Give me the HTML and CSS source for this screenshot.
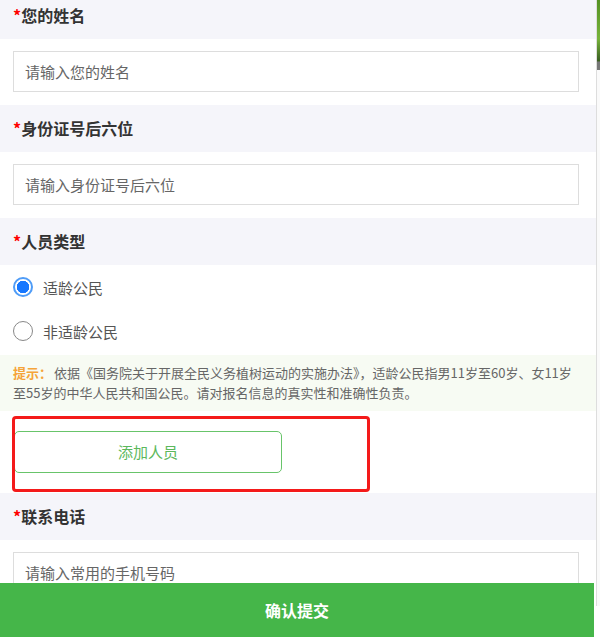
FILE: index.html
```html
<!DOCTYPE html>
<html lang="zh-CN">

<head>
    <meta charset="UTF-8">
    <meta name="viewport" content="width=device-width, initial-scale=1.0">
    <title>报名信息</title>
    <link rel="stylesheet" href="styles.css">
</head>

<body>
    <div class="layout">
        <div class="form">
            <div class="field-title"><span class="req">*</span>您的姓名</div>
            <div class="field-body">
                <div class="input">请输入您的姓名</div>
            </div>

            <div class="field-title"><span class="req">*</span>身份证号后六位</div>
            <div class="field-body">
                <div class="input">请输入身份证号后六位</div>
            </div>

            <div class="field-title"><span class="req">*</span>人员类型</div>
            <div class="radios">
                <label class="radio checked"><span class="dot"></span>适龄公民</label>
                <label class="radio"><span class="dot"></span>非适龄公民</label>
            </div>
            <div class="tip">
                <span class="tip-label">提示：</span>依据《国务院关于开展全民义务植树运动的实施办法》，适龄公民指男11岁至60岁、女11岁至55岁的中华人民共和国公民。请对报名信息的真实性和准确性负责。
            </div>
            <div class="add-row">
                <div class="add-btn">添加人员</div>
                <div class="mark"></div>
            </div>

            <div class="field-title"><span class="req">*</span>联系电话</div>
            <div class="field-body">
                <div class="input">请输入常用的手机号码</div>
            </div>
        </div>
        <div class="behind">
            <div class="behind-pic"></div>
        </div>
    </div>

    <div class="submit">确认提交</div>
</body>

</html>
```

FILE: styles.css
```css
html,
body {
    margin: 0;
    padding: 0;
    overflow: hidden;
}

body {
    font-family: "Microsoft YaHei", "Noto Sans CJK SC", sans-serif;
    color: #333;
    background-color: #fff;
}

.layout {
    display: flex;
    margin-top: -8px;
}

.form {
    width: 596px;
    flex-shrink: 0;
    background-color: #fff;
}

.behind {
    flex: 1;
    border-left: 1px solid #ddd;
    background-color: #fafafa;
}

.behind-pic {
    height: 78px;
    background: linear-gradient(180deg, #4d8a1e, #77b33a 60%, #3b5f22 88%, #777 90%);
}

.field-title {
    height: 47px;
    line-height: 47px;
    padding-left: 13px;
    background-color: #f5f5fa;
    font-size: 16px;
    font-weight: bold;
    color: #333;
}

.req {
    color: #f00;
}

.field-body {
    padding: 12px 17px 13px 13px;
}

.input {
    height: 39px;
    line-height: 39px;
    border: 1px solid #ddd;
    padding-left: 11px;
    font-size: 15px;
    color: #666;
}

.radios {
    padding: 0 13px;
}

.radio {
    display: flex;
    align-items: center;
    height: 44px;
    font-size: 15px;
    color: #555;
}

.radio .dot {
    box-sizing: border-box;
    width: 20px;
    height: 20px;
    border: 1.5px solid #888;
    border-radius: 50%;
    margin-right: 10px;
}

.radio.checked .dot {
    border: 2px solid #4f9cf7;
    background: radial-gradient(circle, #1677ff 0 6px, #fff 6.5px);
}

.tip {
    margin-top: 2px;
    padding: 8px 20px 8px 13px;
    background-color: #f7fbf3;
    font-size: 13px;
    line-height: 20px;
    color: #666;
}

.tip-label {
    margin-right: 2px;
    color: #f5a43a;
    font-weight: bold;
}

.add-row {
    position: relative;
    padding: 20px 13px 20px 14px;
}

.add-btn {
    width: 266px;
    height: 40px;
    line-height: 40px;
    border: 1px solid #68c46a;
    border-radius: 5px;
    text-align: center;
    font-size: 15px;
    color: #5cb85c;
}

.mark {
    position: absolute;
    left: 12px;
    top: 5px;
    width: 352px;
    height: 70px;
    border: 3px solid #f41a1a;
    border-radius: 4px;
}

.submit {
    position: fixed;
    left: 0;
    bottom: 0;
    width: 594px;
    height: 54px;
    line-height: 54px;
    background-color: #45b649;
    color: #fff;
    font-size: 16px;
    font-weight: bold;
    text-align: center;
}
```
